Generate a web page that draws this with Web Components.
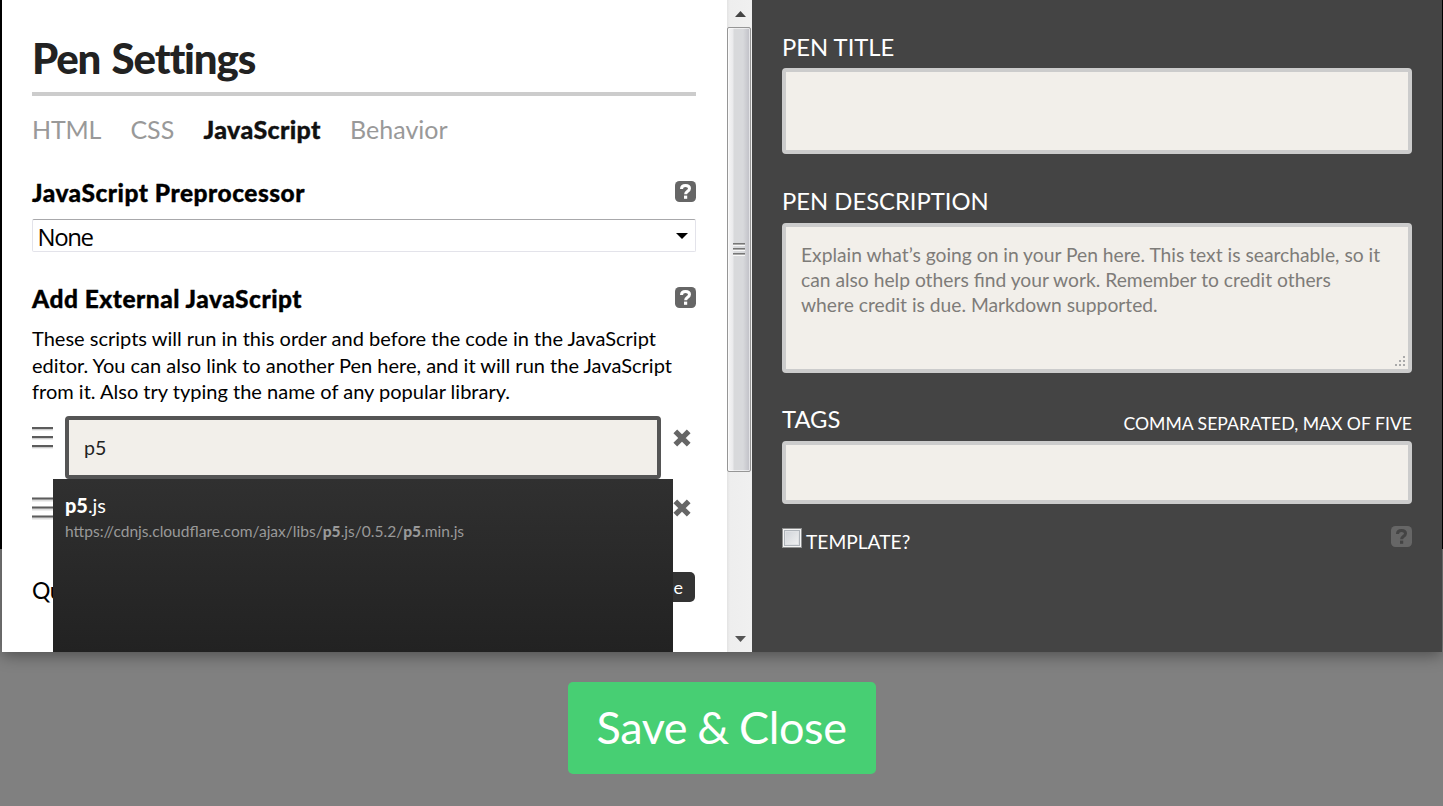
<!DOCTYPE html>
<html lang="en"><head><meta charset="utf-8"><title>Pen Settings</title>
<style>html,body{margin:0;height:806px;overflow:hidden;background:#808080;font-family:Lato,"Liberation Sans",sans-serif}</style></head>
<body><settings-app></settings-app>
<script>
const define=(name,html)=>customElements.define(name,class extends HTMLElement{
  constructor(){super();const t=document.createElement('template');t.innerHTML=html;this.attachShadow({mode:'open'}).append(t.content.cloneNode(true));}
});
define('help-icon',`<style>:host{display:block;width:21px;height:21px;color:#666;--mark:#fff}svg{display:block}</style>
<svg width="21" height="21" viewBox="0 0 21 21"><rect width="21" height="21" rx="4.5" fill="currentColor"/><path d="M6.5 8C6.5 5.600 8.1 4.4 10.5 4.4c2.500 0 4 1.1 4 3.100 0 2.800-3.900 2.600-3.900 5.700" fill="none" style="stroke:var(--mark)" stroke-width="3"/><rect x="9" y="14.600" width="3.200" height="3.200" style="fill:var(--mark)"/></svg>`);
define('drag-grip',`<style>:host{display:block;width:21px;height:24px}i{display:block;height:2px;background:#5c5c5c;box-shadow:0 1px #ccc,0 2px #eee;margin-bottom:7px}:host([soft]) i{box-shadow:0 -1px #aaa,0 1px #999,0 2px #ddd,0 3px #eee;height:1px;margin-bottom:8px;position:relative;top:1px}</style><i></i><i></i><i></i>`);
define('remove-icon',`<style>:host{display:block;width:18px;height:18px}svg{display:block}</style><svg width="18" height="18" viewBox="0 0 18 18"><path d="M2.300 2.300 15.700 15.700M15.700 2.300 2.300 15.700" stroke="#666" stroke-width="5.300" fill="none"/></svg>`);
define('tab-bar',`<style>:host{display:flex;gap:29.3px;height:32px;line-height:32px;font-size:25px;color:#999}::slotted([active]){color:#111;font-weight:900;letter-spacing:.35px;-webkit-text-stroke:.35px}::slotted(:first-child){letter-spacing:-.2px}</style><slot></slot>`);
define('section-head',`<style>:host{display:flex;justify-content:space-between;align-items:flex-start;height:30px}b{font-size:24.5px;line-height:30px;margin-top:-1px;font-weight:900;letter-spacing:.5px;-webkit-text-stroke:.35px;color:#000}help-icon{margin-top:2px}</style><b><slot></slot></b><help-icon></help-icon>`);
define('select-box',`<style>:host{display:flex;box-sizing:border-box;height:33px;border:1px solid #e3e3ea;border-top-color:#a8a8ab;border-radius:2px;align-items:center;justify-content:space-between;padding:2px 7px 0 4.500px;font:24px "Open Sans","Noto Sans",sans-serif;letter-spacing:-1.4px;color:#000}svg{margin-top:-2px}</style><slot></slot><svg width="12" height="6"><path d="M0 0h12L6 6z"/></svg>`);
define('text-box',`<style>:host{display:block;position:relative;box-sizing:border-box;border:4px solid #ccc;border-radius:4px;background:#f2efea;padding:15px 15px;font-size:19.25px;line-height:25px;color:#7e7c79}:host([focus]){border-color:#555;color:#222;font-size:19.6px}:host([resize]) svg{display:block}svg{display:none;position:absolute;right:2px;bottom:1px}</style><slot></slot>
<svg width="12" height="12" fill="#aaa"><path d="M9 0h2v2H9zM5 4h2v2H5zM9 4h2v2H9zM1 8h2v2H1zM5 8h2v2H5zM9 8h2v2H9z"/></svg>`);
define('scroll-bar',`<style>:host{display:flex;flex-direction:column;box-sizing:border-box;width:25px;height:652px;background:linear-gradient(90deg,#e3e3e3,#eee 3px,#f0f0f0)}
.a{height:27px;display:flex;align-items:center;justify-content:center;padding-left:2px}.thumb{box-sizing:border-box;height:445px;width:24px;border:1px solid #969696;border-radius:2px;background:linear-gradient(90deg,#f5f5f5,#eaeaec 5px,#d8d9db 6px,#d8d9dc 15px,#bfbfc6);box-shadow:inset 0 0 0 1px #ffffff90;display:flex;align-items:center;justify-content:center}.space{flex:1}</style>
<div class="a"><svg width="11" height="6"><path d="M0 6 5.500 0 11 6z" fill="#444"/></svg></div>
<div class="thumb"><svg width="13" height="15"><path d="M0 1.500h12M0 6.500h12M0 11.500h12" stroke="#777"/><path d="M0 2.500h12M0 7.500h12M0 12.500h12" stroke="#aaa"/><path d="M0 3.500h12M0 8.500h12M0 13.500h12" stroke="#f8f8f8"/></svg></div><div class="space"></div>
<div class="a"><svg width="11" height="6"><path d="M0 0h11L5.500 6z" fill="#555"/></svg></div>`);
define('suggest-list',`<style>:host{display:block;box-sizing:border-box;width:620px;height:173px;padding:14px 12px;background:linear-gradient(#303030,#222);color:#fff}
.n{font-size:19.9px;line-height:24px}.u{font-size:15.55px;line-height:24px;margin-top:2px;color:#999}</style><div class="n"><slot name="name"></slot></div><div class="u"><slot name="url"></slot></div>`);
define('script-settings',`<style>:host{display:block;position:relative;box-sizing:border-box;width:725px;height:652px;padding:0 31px 0 30px;background:#fff;overflow:hidden;color:#000}
h1{box-sizing:border-box;height:96px;margin:0;padding-top:33px;border-bottom:4px solid #ccc;font-size:42px;line-height:50px;font-weight:900;color:#222;letter-spacing:-1.15px;word-spacing:2.5px}
tab-bar{margin-top:17px}.first{margin-top:34px}select-box{margin-top:10px}.second{margin-top:33px}
p{margin:10px 0 0;font-size:20.03px;line-height:26.5px;white-space:nowrap}
.row{display:grid;grid-template-columns:21px 596px 18px;column-gap:12px;height:63px;margin-top:11px}.row drag-grip{margin-top:11px}.row remove-icon{margin-top:13px}.row text-box{height:63px}
.row.row2{margin-top:7px}.quick{display:flex;justify-content:space-between;margin:23px 1px 0 0;align-items:flex-start;font-size:23px;line-height:36px}.quick span{letter-spacing:-.5px}.quick button{font:18px/30px Lato;color:#fff;background:#333;border:0;border-radius:5px;padding:0 12px;height:30px}
b{font-weight:900}suggest-list{position:absolute;left:51px;top:479px}</style>
<h1>Pen Settings</h1>
<tab-bar><span>HTML</span><span>CSS</span><span active>JavaScript</span><span>Behavior</span></tab-bar>
<section-head class="first">JavaScript Preprocessor</section-head><select-box>None</select-box>
<section-head class="second">Add External JavaScript</section-head>
<p>These scripts will run in this order and before the code in the JavaScript<br>editor. You can also link to another Pen here, and it will run the JavaScript<br>from it. Also try typing the name of any popular library.</p>
<div class="row"><drag-grip></drag-grip><text-box focus>p5</text-box><remove-icon></remove-icon></div>
<div class="row row2"><drag-grip soft></drag-grip><span></span><remove-icon></remove-icon></div>
<div class="quick"><span>Qu</span><button>e</button></div>
<suggest-list><span slot="name"><b>p5</b>.js</span><span slot="url">https://cdnjs.cloudflare.com/ajax/libs/<b>p5</b>.js/0.5.2/<b>p5</b>.min.js</span></suggest-list>`);
define('pen-details',`<style>:host{display:block;box-sizing:border-box;width:690px;height:652px;background:#444;padding:32px 30px 0;color:#fff}
label{display:block;font-size:23.8px;line-height:30px}.title{height:86px;margin-top:6px}.desc{margin-top:32px}.area{height:150px;margin-top:7px;white-space:nowrap}
.tags{display:flex;justify-content:space-between;margin-top:31px}.tags span{font-size:17.62px;line-height:40px;height:30px}.tag{height:63px;margin-top:7px}
.tpl{display:flex;justify-content:space-between;margin-top:22px;font-size:19.2px;line-height:32px}.tpl div{display:flex;gap:4px}.tpl i{box-sizing:border-box;width:20px;height:20px;margin-top:2px;border:1px solid #8e8f8f;background:linear-gradient(135deg,#cbcfd5,#f6f6f6);box-shadow:inset 0 0 0 1px #f4f4f4,inset 0 0 0 2px #aeb3b9,inset 0 0 0 3px #e0e2e5}help-icon{--mark:#444;color:#666}</style>
<label>PEN TITLE</label><text-box class="title"></text-box><label class="desc">PEN DESCRIPTION</label>
<text-box class="area" resize>Explain what’s going on in your Pen here. This text is searchable, so it<br>can also help others find your work. Remember to credit others<br>where credit is due. Markdown supported.</text-box>
<label class="tags">TAGS<span>COMMA SEPARATED, MAX OF FIVE</span></label><text-box class="tag"></text-box>
<div class="tpl"><div><i></i><span>TEMPLATE?</span></div><help-icon></help-icon></div>`);
define('save-button',`<style>:host{display:block;width:308px;height:92px;box-sizing:border-box;border-radius:5px;background:#47cf73;color:#fff;text-align:center;font-size:45px;letter-spacing:-.4px;word-spacing:-1px;line-height:91px;white-space:nowrap}</style><slot></slot>`);
define('settings-app',`<style>:host{display:flex;flex-direction:column;align-items:center;height:806px;width:1443px;background:linear-gradient(#000 549px,#808080 549px)}
.panel{display:flex;width:1440px;height:652px;margin-left:1px;box-shadow:0 3px 15px #0006}save-button{margin-top:30px}</style>
<div class="panel"><script-settings></script-settings><scroll-bar></scroll-bar><pen-details></pen-details></div><save-button>Save &amp; Close</save-button>`);
</script></body></html>
